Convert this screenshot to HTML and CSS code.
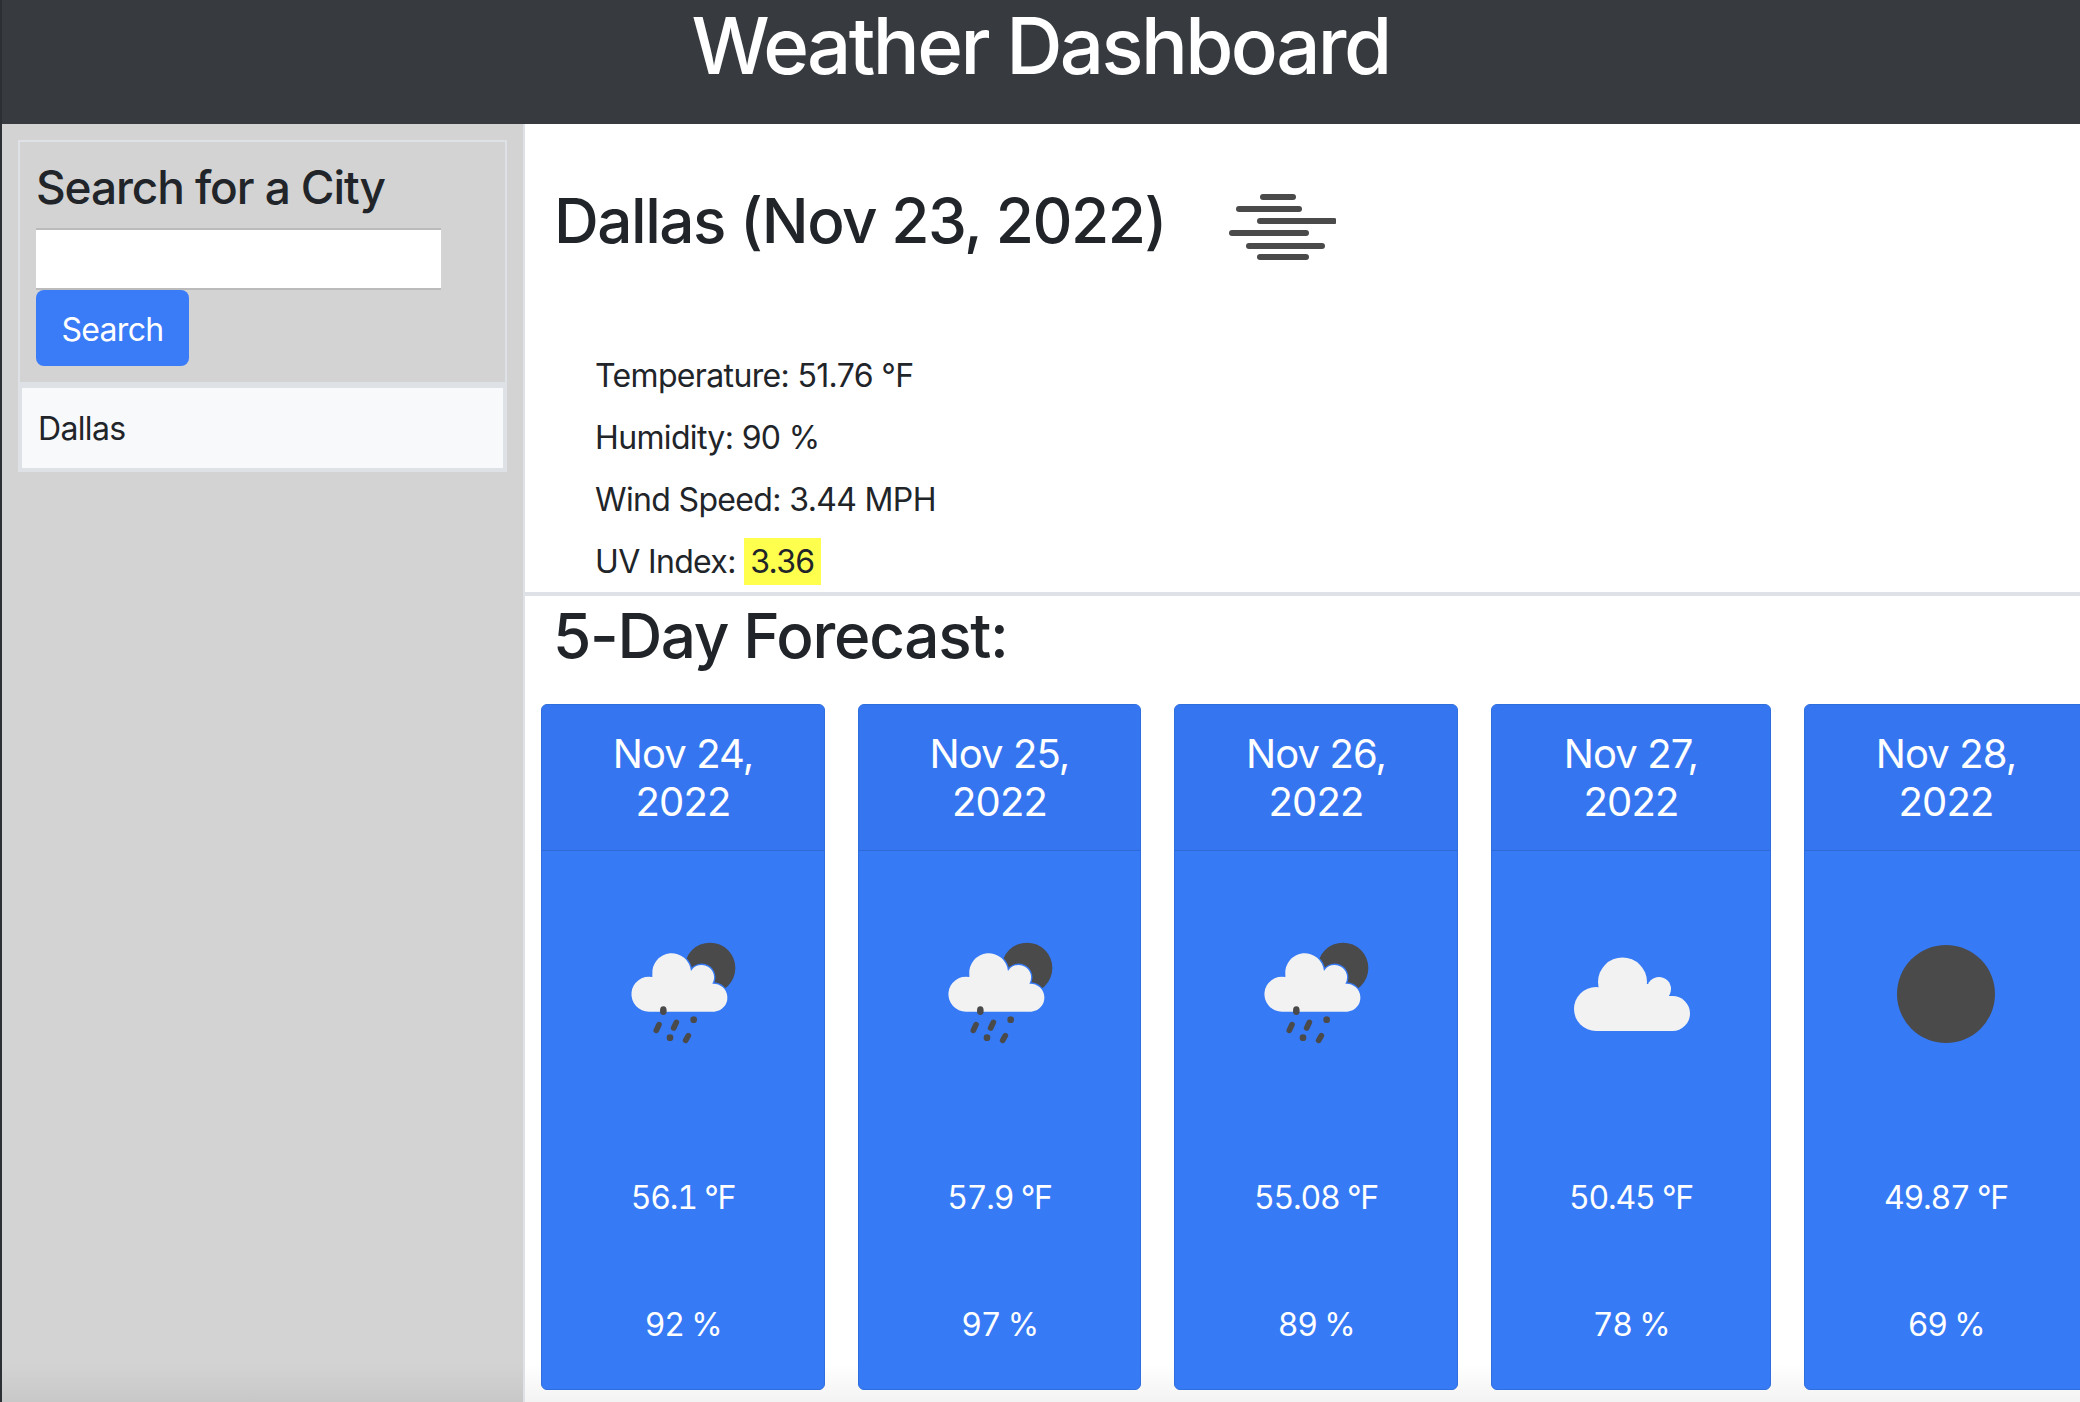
FILE: index.html
```html
<!DOCTYPE html>
<html lang="en">
<head>
  <meta charset="UTF-8">
  <meta name="viewport" content="width=device-width, initial-scale=1.0">
  <title>Weather Dashboard</title>
  <link rel="stylesheet" href="styles.css">
</head>
<body>
  <svg class="icon-defs" width="0" height="0" aria-hidden="true">
    <symbol id="icon-rain" viewBox="69 39 360 360">
      <circle cx="330" cy="141" r="76" fill="#4a4a4a"/>
      <path d="M147 272A52.5 52.5 0 1 1 157 168L157 160A58 58 0 1 1 273 150A36 36 0 0 1 337 188A42 42 0 0 1 343 272Z" fill="#f2f2f2" stroke="#367af6" stroke-width="8" paint-order="stroke"/>
      <g fill="#4a4a4a">
        <ellipse cx="190" cy="269" rx="10" ry="13"/>
        <circle cx="281" cy="296" r="10"/>
        <circle cx="210" cy="350" r="10"/>
      </g>
      <g stroke="#4a4a4a" stroke-width="17" stroke-linecap="round">
        <line x1="177" y1="311" x2="169" y2="328"/>
        <line x1="229" y1="304" x2="221" y2="321"/>
        <line x1="265" y1="344" x2="257" y2="358"/>
      </g>
    </symbol>
    <symbol id="icon-cloud" viewBox="0 0 120 120">
      <g fill="#f2f2f2">
        <circle cx="25" cy="75" r="22"/>
        <circle cx="51.5" cy="48" r="24.5"/>
        <circle cx="88" cy="55" r="12"/>
        <circle cx="101.5" cy="79.5" r="17.5"/>
        <rect x="25" y="62" width="76.5" height="35"/>
        <rect x="51" y="50" width="40" height="20"/>
      </g>
    </symbol>
    <symbol id="icon-clear" viewBox="0 0 120 120">
      <circle cx="60" cy="60" r="49" fill="#4a4a4a"/>
    </symbol>
  </svg>

  <header class="topbar">
    <h1>Weather Dashboard</h1>
  </header>

  <div class="layout">
    <aside class="sidebar">
      <div class="search-box">
        <h3>Search for a City</h3>
        <input class="search-input" type="text">
        <button class="search-btn">Search</button>
      </div>
      <ul class="history">
        <li>Dallas</li>
      </ul>
    </aside>

    <main class="content">
      <div class="today">
        <div class="today-head">
          <h2>Dallas (Nov 23, 2022)</h2>
          <svg class="fog" width="110" height="70" viewBox="0 0 110 70">
            <g stroke="#4a4a4a" stroke-width="6" stroke-linecap="round">
              <line x1="37" y1="7" x2="67" y2="7"/>
              <line x1="13" y1="19" x2="73" y2="19"/>
              <line x1="34" y1="31" x2="108" y2="31"/>
              <line x1="6" y1="43" x2="80" y2="43"/>
              <line x1="23" y1="56" x2="96" y2="56"/>
              <line x1="34" y1="67" x2="80" y2="67"/>
            </g>
          </svg>
        </div>
        <div class="details">
          <p>Temperature: 51.76 °F</p>
          <p>Humidity: 90 %</p>
          <p>Wind Speed: 3.44 MPH</p>
          <p>UV Index: <span class="uv">3.36</span></p>
        </div>
      </div>

      <h2 class="forecast-title">5-Day Forecast:</h2>
      <div class="forecast">
        <div class="day">
          <div class="day-head">Nov 24, 2022</div>
          <div class="day-body">
            <div class="day-icon"><svg width="120" height="120"><use href="#icon-rain"/></svg></div>
            <p>56.1 °F</p>
            <p>92 %</p>
          </div>
        </div>
        <div class="day">
          <div class="day-head">Nov 25, 2022</div>
          <div class="day-body">
            <div class="day-icon"><svg width="120" height="120"><use href="#icon-rain"/></svg></div>
            <p>57.9 °F</p>
            <p>97 %</p>
          </div>
        </div>
        <div class="day">
          <div class="day-head">Nov 26, 2022</div>
          <div class="day-body">
            <div class="day-icon"><svg width="120" height="120"><use href="#icon-rain"/></svg></div>
            <p>55.08 °F</p>
            <p>89 %</p>
          </div>
        </div>
        <div class="day">
          <div class="day-head">Nov 27, 2022</div>
          <div class="day-body">
            <div class="day-icon"><svg width="120" height="120"><use href="#icon-cloud"/></svg></div>
            <p>50.45 °F</p>
            <p>78 %</p>
          </div>
        </div>
        <div class="day">
          <div class="day-head">Nov 28, 2022</div>
          <div class="day-body">
            <div class="day-icon"><svg width="120" height="120"><use href="#icon-clear"/></svg></div>
            <p>49.87 °F</p>
            <p>69 %</p>
          </div>
        </div>
      </div>
    </main>
  </div>
</body>
</html>
```
FILE: styles.css
```css
html, body {
  height: 100%;
}

body {
  margin: 0;
  border-left: 2px solid #2c3035;
  overflow: hidden;
  font-family: Inter, "Liberation Sans", sans-serif;
  font-size: 32px;
  letter-spacing: -0.65px;
  color: #212529;
  background-color: #fff;
}

.icon-defs {
  display: block;
  height: 0;
}

.topbar {
  height: 124px;
  background-color: #373b40;
  text-align: center;
  color: white;
}

.topbar h1 {
  margin: 0;
  font-size: 78px;
  font-weight: 550;
  line-height: 92px;
  letter-spacing: -2.6px;
  padding-right: 1px;
}

.layout {
  display: flex;
  height: 1278px;
}

/* sidebar */
.sidebar {
  flex: 0 0 489px;
  border-right: 2px solid #dee2e6;
  padding: 16px 16px 0 16px;
  background: linear-gradient(to bottom, #d3d3d3 97%, #c8c8c8 100%);
}

.search-box {
  border: 2px solid #dee2e6;
  border-bottom: none;
  padding: 19px 16px 16px 16px;
}

.search-box h3 {
  margin: 0 0 14px 0;
  font-size: 46px;
  font-weight: 550;
  line-height: 53px;
  letter-spacing: -1.1px;
}

.search-input {
  display: block;
  width: 405px;
  height: 62px;
  box-sizing: border-box;
  border: none;
  border-top: 2px solid #bbb;
  border-bottom: 2px solid #bbb;
  background-color: #fff;
}

.search-btn {
  display: block;
  width: 153px;
  height: 76px;
  border: none;
  border-radius: 8px;
  padding: 2px 0 0 0;
  background-color: #3a7bf8;
  color: white;
  font-family: inherit;
  font-size: 32px;
  letter-spacing: -0.7px;
}

.history {
  list-style: none;
  margin: 0;
  padding: 0;
  border: 4px solid #dee2e6;
  border-top-width: 6px;
}

.history li {
  height: 80px;
  line-height: 82px;
  padding-left: 16px;
  background-color: #f8f9fa;
}

/* main column */
.content {
  flex: 1;
  min-width: 0;
  overflow: hidden;
  background: linear-gradient(to bottom, #fff 97%, #f3f3f3 100%);
}

.today {
  height: 472px;
  box-sizing: border-box;
  border-bottom: 4px solid #dee2e6;
}

.today-head {
  display: flex;
  align-items: flex-start;
  gap: 60px;
  padding: 58px 0 0 29px;
  height: 162px;
  box-sizing: border-box;
}

.today-head h2 {
  margin: 0;
  font-size: 62px;
  font-weight: 550;
  line-height: 77px;
  letter-spacing: -1.47px;
}

.fog {
  margin-top: 8px;
}

.details {
  padding: 59px 0 0 70px;
}

.details p {
  margin: 0;
  line-height: 62px;
}

.uv {
  background-color: #ffff4d;
  padding: 4px 6px;
}

.forecast-title {
  margin: 4px 0 32px 28px;
  font-size: 62px;
  font-weight: 550;
  line-height: 72px;
  letter-spacing: -1.3px;
}

.forecast {
  display: grid;
  grid-template-columns: 284px 283px 284px 280px 284px;
  column-gap: 33px;
  margin-left: 16px;
  width: 1600px;
}

.day {
  height: 686px;
  box-sizing: border-box;
  border: 1px solid #2f6edd;
  border-radius: 6px;
  background-color: #367af6;
  color: white;
  text-align: center;
}

.day-head {
  height: 146px;
  box-sizing: border-box;
  padding: 25px 50px 0 50px;
  font-size: 40px;
  line-height: 48px;
  letter-spacing: -0.9px;
  background-color: #3576f0;
  border-bottom: 1px solid #2d6ad6;
  border-radius: 5px 5px 0 0;
}

.day-icon {
  height: 286px;
  margin-bottom: 37px;
  display: flex;
  align-items: center;
  justify-content: center;
}

.day-body p {
  margin: 0 0 79px 0;
  line-height: 48px;
  font-variant-numeric: tabular-nums;
  letter-spacing: -1.2px;
}
```
